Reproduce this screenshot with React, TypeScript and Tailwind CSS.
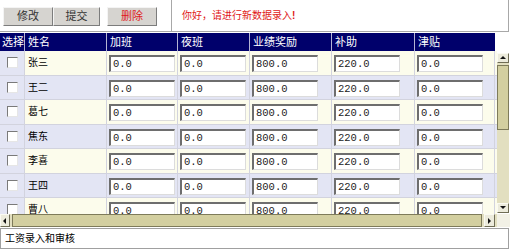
import React from 'react';

const names = ['张三', '王二', '葛七', '焦东', '李喜', '王四', '曹八'];

// money columns: header, cell width, default value
const cols = [
  { label: '加班', w: 'w-[71px]', value: '0.0' },
  { label: '夜班', w: 'w-[72px]', value: '0.0' },
  { label: '业绩奖励', w: 'w-[82px]', value: '800.0' },
  { label: '补助', w: 'w-[83px]', value: '220.0' },
  { label: '津贴', w: 'w-[80px]', value: '0.0' },
];

const cjk = 'font-["Liberation_Sans","Noto_Sans_CJK_SC",sans-serif]';

function OldButton({ label, red, w }: { label: string; red?: boolean; w: string }) {
  return (
    <button
      className={`${w} h-[19px] bg-[#d6d4d0] border border-t-[#f4f4f4] border-l-[#f4f4f4] border-b-[#7c7c7c] border-r-[#7c7c7c] text-[11px] leading-none ${
        red ? 'text-[#e01818]' : 'text-[#333]'
      }`}
    >
      {label}
    </button>
  );
}

function Arrow({ dir }: { dir: 'up' | 'down' | 'left' | 'right' }) {
  const pts = {
    up: '1,5 4,2 7,5',
    down: '1,2 4,5 7,2',
    left: '5,1 2,4 5,7',
    right: '2,1 5,4 2,7',
  }[dir];
  return (
    <svg width="8" height="8" viewBox="0 0 8 8">
      <polygon points={pts} fill="#111" />
    </svg>
  );
}

function ScrollBtn({ dir, cls }: { dir: 'up' | 'down' | 'left' | 'right'; cls: string }) {
  return (
    <div
      className={`${cls} flex items-center justify-center bg-[#ecebdc] border border-t-[#fafaf2] border-l-[#fafaf2] border-b-[#6f6d55] border-r-[#6f6d55]`}
    >
      <Arrow dir={dir} />
    </div>
  );
}

export default function App() {
  return (
    <div className={`w-[513px] h-[251px] bg-white ${cjk} text-black overflow-hidden`}>
      {/* toolbar + message */}
      <div className="flex h-[32px] w-[509px] border-b border-[#a8a8a8]">
        <div className="w-[172px] flex items-start pt-[7px] pl-[3px] border-r border-[#a8a8a8]">
          <OldButton label="修改" w="w-[50px]" />
          <OldButton label="提交" w="w-[47px]" />
          <div className="w-[7px]" />
          <OldButton label="删除" red w="w-[50px]" />
        </div>
        <div className="flex-1 flex items-center pl-[10px] border-r border-[#a8a8a8]">
          <span className="text-[10px] text-[#e01818] leading-none">
            你好，请进行新数据录入<b>!</b>
          </span>
        </div>
      </div>

      {/* header */}
      <div className="mt-[1px] flex h-[18px] w-[495px] bg-[#00006b] text-white text-[11px] leading-[18px]">
        <div className="w-[25px] pl-[2px] border-r border-[#b4b4d4]">选择</div>
        <div className="w-[82px] pl-[3px] border-r border-[#b4b4d4]">姓名</div>
        {cols.map((c) => (
          <div key={c.label} className={`${c.w} pl-[3px] border-r border-[#b4b4d4] last:border-r-0`}>
            {c.label}
          </div>
        ))}
      </div>

      {/* body + vertical scrollbar */}
      <div className="flex h-[163px]">
        <div className="w-[497px] overflow-hidden">
          {names.map((n, i) => {
            const bg = i % 2 === 0 ? 'bg-[#fcfcec]' : 'bg-[#e3e5f4]';
            return (
              <div key={n} className={`flex h-[24.5px] w-[497px] border-b border-[#d2d3de] ${bg}`}>
                <div className="w-[25px] h-full bg-[#e3e5f4] border-r border-[#d2d3de] pl-[7px] pt-[6px]">
                  <div className="w-[11px] h-[11px] bg-white border border-t-[#7a7a7a] border-l-[#7a7a7a] border-b-[#e6e6e6] border-r-[#e6e6e6]" />
                </div>
                <div className="w-[82px] h-full border-r border-[#d2d3de] pl-[3px] text-[10px] leading-[23px]">
                  {n}
                </div>
                {cols.map((c) => (
                  <div key={c.label} className={`${c.w} h-full border-r border-[#d2d3de] pl-[2px] pt-[4px]`}>
                    <div className="w-[66px] h-[17px] bg-white border-t-2 border-l-2 border-b border-r border-t-[#6e6e6e] border-l-[#6e6e6e] border-b-[#dcdcdc] border-r-[#dcdcdc] pl-[2px] font-['Liberation_Mono',monospace] text-[10.5px] leading-[15px] text-[#222]">
                      {c.value}
                    </div>
                  </div>
                ))}
              </div>
            );
          })}
        </div>
        <div className="w-[13px] pt-[2px] pb-[1px] flex flex-col">
          <ScrollBtn dir="up" cls="h-[10px] w-[12px]" />
          <div className="flex-1 w-[12px] bg-[#e2dfc0] flex flex-col pt-[2px]">
            <div className="h-[65px] bg-[#d3cfa0] border border-[#7e7b5a]" />
          </div>
          <ScrollBtn dir="down" cls="h-[10px] w-[12px]" />
        </div>
      </div>

      {/* horizontal scrollbar */}
      <div className="flex h-[13px] w-[510px]">
        <div className="w-[497px] flex bg-[#e2dfc0]">
          <ScrollBtn dir="left" cls="w-[10px] h-full" />
          <div className="w-[470px] ml-[2px] h-full bg-[#d3cfa0] border border-[#7e7b5a]" />
          <ScrollBtn dir="right" cls="ml-[2px] w-[11px] h-full" />
        </div>
        <div className="flex-1 bg-[#f2f1e6]" />
      </div>

      {/* status */}
      <div className="mt-[1px] w-[509px] h-[21px] border border-[#a0a0a0] pl-[4px] text-[10px] leading-[19px]">
        工资录入和审核
      </div>
    </div>
  );
}
